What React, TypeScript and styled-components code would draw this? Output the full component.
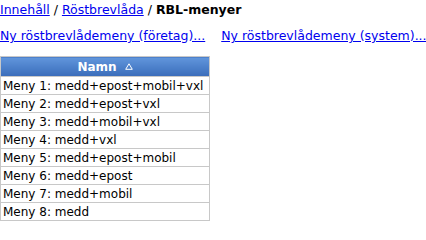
import styled, { createGlobalStyle } from "styled-components";

const menus = [
  "Meny 1: medd+epost+mobil+vxl",
  "Meny 2: medd+epost+vxl",
  "Meny 3: medd+mobil+vxl",
  "Meny 4: medd+vxl",
  "Meny 5: medd+epost+mobil",
  "Meny 6: medd+epost",
  "Meny 7: medd+mobil",
  "Meny 8: medd",
];

const GlobalStyle = createGlobalStyle`
  body {
    margin: 0;
    background: #ffffff;
    font-family: "DejaVu Sans", Verdana, sans-serif;
    font-size: 12px;
    color: #000000;
    overflow: hidden;
  }
`;

const App = () => {
  return (
    <>
      <GlobalStyle />
      <Page>
        <Breadcrumb>
          <Link href="#">Innehåll</Link> / <Link href="#">Röstbrevlåda</Link> /{" "}
          <Current>RBL-menyer</Current>
        </Breadcrumb>
        <Actions>
          <Link href="#">Ny röstbrevlådemeny (företag)...</Link>
          <Link href="#">Ny röstbrevlådemeny (system)...</Link>
        </Actions>
        <Table>
          <thead>
            <tr>
              <HeaderCell>
                Namn
                <SortIcon viewBox="0 0 8 7">
                  <path d="M4 0.8 L7.3 6.3 L0.7 6.3 Z" fill="none" stroke="#fff" strokeWidth="1" />
                </SortIcon>
              </HeaderCell>
            </tr>
          </thead>
          <tbody>
            {menus.map((m) => (
              <tr key={m}>
                <Cell>{m}</Cell>
              </tr>
            ))}
          </tbody>
        </Table>
      </Page>
    </>
  );
};

const Page = styled.div`
  display: flex;
  flex-direction: column;
  padding-top: 2px;
`;

const Breadcrumb = styled.div`
  line-height: 16px;
  font-size: 12.5px;
  white-space: nowrap;
`;

const Current = styled.b`
  font-weight: bold;
`;

const Link = styled.a`
  color: #0000ee;
  text-decoration: underline;
  white-space: nowrap;
  flex: none;
`;

const Actions = styled.div`
  display: flex;
  gap: 16px;
  margin-top: 10px;
  line-height: 16px;
  font-size: 12.5px;
`;

const Table = styled.table`
  margin-top: 12px;
  border-collapse: collapse;
  width: 210px;
`;

const HeaderCell = styled.th`
  height: 19px;
  padding: 0 4px;
  color: #ffffff;
  font-weight: bold;
  text-align: center;
  border: 1px solid #c8c8c8;
  background: linear-gradient(#6196dc, #3a6cba);
`;

const SortIcon = styled.svg`
  width: 8px;
  height: 7px;
  margin-left: 8px;
  vertical-align: 1px;
`;

const Cell = styled.td`
  height: 17px;
  padding: 0 2px;
  border: 1px solid #c8c8c8;
  white-space: nowrap;
`;

export default App;
